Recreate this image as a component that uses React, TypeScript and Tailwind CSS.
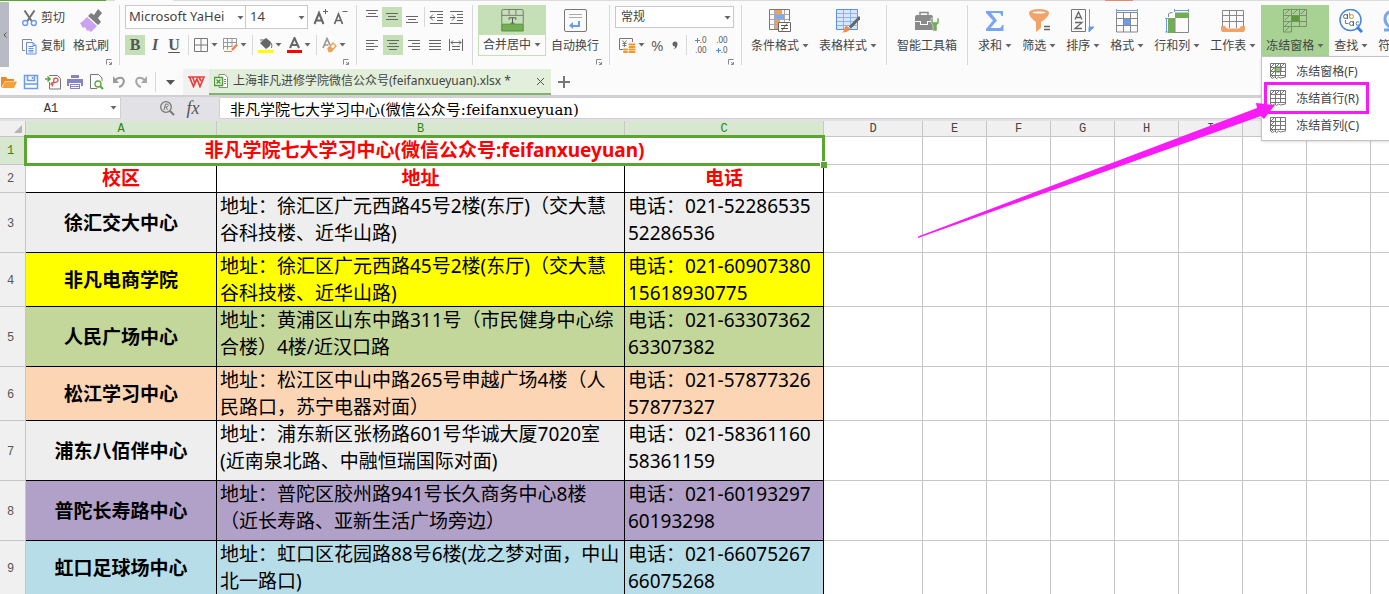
import type { ReactNode } from "react"
import clsx from "clsx"

interface GroupProps {
    children: ReactNode
    launcher?: boolean
    last?: boolean
    className?: string
}

interface BigButtonProps {
    label: string
    icon: ReactNode
    caret?: boolean
    className?: string
}

interface Campus {
    name: string
    address: string[]
    phone: string[]
    color: string
    height: string
}

const campuses: Campus[] = [
    { name: "徐汇交大中心", address: ["地址：徐汇区广元西路45号2楼(东厅)（交大慧", "谷科技楼、近华山路)"], phone: ["电话：021-52286535", "52286536"], color: "bg-[#eeeeee]", height: "h-[60px]" },
    { name: "非凡电商学院", address: ["地址：徐汇区广元西路45号2楼(东厅)（交大慧", "谷科技楼、近华山路)"], phone: ["电话：021-60907380", "15618930775"], color: "bg-[#ffff00]", height: "h-[54px]" },
    { name: "人民广场中心", address: ["地址：黄浦区山东中路311号（市民健身中心综", "合楼）4楼/近汉口路"], phone: ["电话：021-63307362", "63307382"], color: "bg-[#c4d79b]", height: "h-[60px]" },
    { name: "松江学习中心", address: ["地址：松江区中山中路265号申越广场4楼（人", "民路口，苏宁电器对面）"], phone: ["电话：021-57877326", "57877327"], color: "bg-[#fcd5b4]", height: "h-[54px]" },
    { name: "浦东八佰伴中心", address: ["地址：浦东新区张杨路601号华诚大厦7020室", "(近南泉北路、中融恒瑞国际对面)"], phone: ["电话：021-58361160", "58361159"], color: "bg-[#eeeeee]", height: "h-[60px]" },
    { name: "普陀长寿路中心", address: ["地址：普陀区胶州路941号长久商务中心8楼", "（近长寿路、亚新生活广场旁边）"], phone: ["电话：021-60193297", "60193298"], color: "bg-[#b1a0c7]", height: "h-[60px]" },
    { name: "虹口足球场中心", address: ["地址：虹口区花园路88号6楼(龙之梦对面，中山", "北一路口)"], phone: ["电话：021-66075267", "66075268"], color: "bg-[#b7dde8]", height: "h-[54px]" },
]

const spare = ["D", "E", "F", "G", "H", "I", "", "", ""]

function Caret({ className }: { className?: string }) {
    return (
        <svg width="7" height="4" viewBox="0 0 7 4" className={clsx("shrink-0", className)}>
            <path d="M0.5 0h6L3.5 3.6z" fill="#666" />
        </svg>
    )
}

function Group({ children, launcher, last, className }: GroupProps) {
    return (
        <div className={clsx("relative flex h-[60px] shrink-0", !last && "border-r border-[#d8d8d8]", className)}>
            {children}
            {launcher && (
                <svg width="6" height="6" viewBox="0 0 6 6" className="absolute bottom-0 right-[7px]">
                    <path d="M0.5 5.5V0.5H5.5M3 5.5H5.5V3M3 3l2 2" fill="none" stroke="#888" />
                </svg>
            )}
        </div>
    )
}

function Separator() {
    return <span className="h-5 w-px shrink-0 bg-[#d8d8d8]" />
}

function BigButton({ label, icon, caret = true, className }: BigButtonProps) {
    return (
        <button className={clsx("flex h-[51px] shrink-0 flex-col items-center px-[5px] pt-1", className)}>
            <span className="flex h-6 items-start">{icon}</span>
            <span className="mt-[3px] flex items-center gap-[3px] whitespace-nowrap leading-[20px]">
                {label}
                {caret && <Caret />}
            </span>
        </button>
    )
}

function Tool({ label, children }: { label: string; children: ReactNode }) {
    return (
        <button aria-label={label} className="flex h-5 shrink-0 items-center gap-[2px]">
            {children}
            <Caret />
        </button>
    )
}

function Lines({ label, rows, active }: { label: string; rows: string; active?: boolean }) {
    return (
        <button aria-label={label} className={clsx("flex size-5 shrink-0 items-center justify-center", active && "bg-[#c5e0b7]")}>
            <svg width="16" height="16" viewBox="0 0 16 16" fill="none" stroke="#666">
                <path d={rows} />
            </svg>
        </button>
    )
}

/* ---------- clipboard ---------- */

function Clipboard() {
    return (
        <Group launcher className="pl-[13px] pr-[10px]">
            <div className="flex flex-col gap-2">
                <button className="flex h-5 items-center gap-1 pt-[6px]">
                    <svg width="15" height="17" viewBox="0 0 15 17" fill="none">
                        <path d="M2.5 0.5L9.6 11M12.5 0.5L5.4 11" stroke="#707070" strokeWidth="2" />
                        <circle cx="3.2" cy="13" r="2.5" stroke="#6c9be8" strokeWidth="1.4" />
                        <circle cx="11.8" cy="13" r="2.5" stroke="#6c9be8" strokeWidth="1.4" />
                    </svg>
                    剪切
                </button>
                <button className="flex h-5 items-center gap-1 pt-[6px]">
                    <svg width="15" height="17" viewBox="0 0 15 17" fill="none">
                        <path d="M3 12.5H0.5V1.5H9.5V3" stroke="#888" />
                        <path d="M4.5 4.5H11L14 7.5V16H4.5z" fill="#fff" stroke="#5c8ee6" />
                        <path d="M6.5 8.5h5M6.5 10.5h5M6.5 12.5h5M6.5 14h5M11 4.5v3h3" stroke="#5c8ee6" />
                    </svg>
                    复制
                </button>
            </div>
            <button className="ml-2 flex h-[51px] flex-col items-center pt-1">
                <svg width="24" height="24" viewBox="0 0 24 24">
                    <path d="M1 14L4 12l4-4 10 9-6 6-3-2-1 1-2-4-2 1z" fill="#c9a3f0" />
                    <path d="M9 7l3-3 3 2L19 0l4 4-4 5 3 4-3 3z" fill="#7d7d7d" />
                </svg>
                <span className="mt-[3px] leading-[20px]">格式刷</span>
            </button>
        </Group>
    )
}

/* ---------- font ---------- */

function FontGroup() {
    return (
        <Group launcher className="flex-col gap-[6px] pl-[5px] pr-[7px]">
            <div className="flex h-6 items-center">
                <div className="relative h-6 w-[121px]">
                    <select aria-label="字体" className="size-full appearance-none border border-[#c8c8c8] bg-white pl-[3px] text-[13px] outline-none">
                        <option>Microsoft YaHei</option>
                    </select>
                    <Caret className="pointer-events-none absolute right-[2px] top-[11px]" />
                </div>
                <div className="relative -ml-px h-6 w-[63px]">
                    <select aria-label="字号" className="size-full appearance-none border border-[#c8c8c8] bg-white pl-1 text-[13px] outline-none">
                        <option>14</option>
                    </select>
                    <Caret className="pointer-events-none absolute right-[3px] top-[11px]" />
                </div>
                <button aria-label="增大字号" className="ml-[5px]">
                    <svg width="16" height="18" viewBox="0 0 16 18" fill="none" stroke="#666">
                        <path d="M1.500 16L6 5 10.500 16M3 12.500h6" strokeWidth="2" />
                        <path d="M10 3.500h5M12.500 1v5" />
                    </svg>
                </button>
                <button aria-label="减小字号" className="ml-1">
                    <svg width="16" height="18" viewBox="0 0 16 18" fill="none" stroke="#666">
                        <path d="M1.500 16L5.500 6 9.500 16M3 12.500h5" strokeWidth="1.700" />
                        <path d="M9.500 3.500h5" />
                    </svg>
                </button>
            </div>
            <div className="flex h-5 items-center gap-[5px] text-[#555]">
                <div className="flex font-['Liberation_Serif',serif] text-base leading-5">
                    <button className="w-5 bg-[#c5e0b7] font-bold">B</button>
                    <button className="w-5 font-bold italic">I</button>
                    <button className="w-[18px] font-bold underline underline-offset-2">U</button>
                </div>
                <Separator />
                <Tool label="边框">
                    <svg width="15" height="14" viewBox="0 0 15 14" fill="none" stroke="#777">
                        <path d="M0.500 0.500h13v13h-13zM7 0.500v13M0.500 7h13" />
                    </svg>
                </Tool>
                <Tool label="绘图边框">
                    <svg width="15" height="14" viewBox="0 0 15 14" fill="none">
                        <path d="M0.500 0.500h13v6M0.500 0.500v11M4.500 0.500v11M9 0.500v8M0.500 4.500h13M0.500 8.500h9" stroke="#999" />
                        <path d="M14 6.500l-5 5.500" stroke="#f08246" strokeWidth="2.500" />
                        <path d="M1 13.500h8" stroke="#f08246" />
                    </svg>
                </Tool>
                <Separator />
                <Tool label="填充颜色">
                    <svg width="15" height="16" viewBox="0 0 15 16">
                        <path d="M2 6l6-5 5 4-1 4-4 3z" fill="#666" />
                        <path d="M2 3h5M13 6c1 1 1 3 0.500 5" stroke="#666" fill="none" />
                        <path d="M0 13h15v3H0z" fill="#ffff00" />
                    </svg>
                </Tool>
                <Tool label="字体颜色">
                    <svg width="15" height="16" viewBox="0 0 15 16">
                        <path d="M3 11L7.500 1 12 11M4.500 8h6" stroke="#666" strokeWidth="2" fill="none" />
                        <path d="M0 13h15v3H0z" fill="#ff0000" />
                    </svg>
                </Tool>
                <Separator />
                <Tool label="清除">
                    <svg width="15" height="16" viewBox="0 0 15 16" fill="none">
                        <path d="M1 11L5 1.500 8 8M2.500 8h4" stroke="#999" strokeWidth="1.700" />
                        <path d="M6 11.500l5-5.500 3 3-5 5.500H7z" stroke="#eda255" strokeWidth="1.500" fill="#fff" />
                        <path d="M6 11.500l2.500-2.500 3 3L9 14.500H7z" fill="#eda255" />
                    </svg>
                </Tool>
            </div>
        </Group>
    )
}

/* ---------- alignment ---------- */

function AlignGroup() {
    return (
        <Group className="flex-col gap-2 px-[5px]">
            <div className="flex items-center pt-[2px]">
                <Lines label="顶端对齐" rows="M2 1.500h12M4 4.500h8M2 7.500h12" />
                <Lines label="垂直居中" rows="M2 4.500h12M4 7.500h8M2 10.500h12" active />
                <Lines label="底端对齐" rows="M2 7.500h12M4 10.500h8M2 13.500h12" />
                <span className="mx-[2px] h-5 w-px bg-[#d8d8d8]" />
                <Lines label="减少缩进" rows="M1 2.500h13M8 5.500h6M8 8.500h6M8 11.500h6M1 14.500h13M1 8.500h5M4 5.500L1 8.500l3 3" />
                <Lines label="增加缩进" rows="M1 2.500h13M8 5.500h6M8 8.500h6M8 11.500h6M1 14.500h13M1 8.500h5M3 5.500l3 3-3 3" />
            </div>
            <div className="flex items-center gap-px">
                <Lines label="左对齐" rows="M2 3.500h12M2 6.500h8M2 9.500h12M2 12.500h8" />
                <Lines label="居中" rows="M2 3.500h12M4 6.500h8M2 9.500h12M4 12.500h8" active />
                <Lines label="右对齐" rows="M2 3.500h12M6 6.500h8M2 9.500h12M6 12.500h8" />
                <Lines label="两端对齐" rows="M2 3.500h12M2 6.500h12M2 9.500h12M2 12.500h12" />
                <Lines label="分散对齐" rows="M1.500 2v12M14.500 2v12M3 5.500h10M5 3.500l-2 2 2 2M11 3.500l2 2-2 2M4 9.500h8M4 12.500h8" />
            </div>
        </Group>
    )
}

function MergeGroup() {
    return (
        <Group launcher className="pl-[5px] pr-[5px]">
            <button className="flex h-[51px] flex-col items-center border border-[#c5e0b7] bg-[#c5e0b7]">
                <svg width="23" height="24" viewBox="0 0 23 24" fill="none" className="mt-[3px]">
                    <path d="M0.500 15.500h22v7h-22z" fill="#74ae55" stroke="#5a8f3e" />
                    <path d="M0.500 15V2Q0.500 0.500 2 0.500H21Q22.500 0.500 22.500 2V15M0.500 6.500h22M8 1v5M15 1v5" stroke="#777" />
                    <path d="M8 9h7v2M11.500 9v5.500M9.500 14.500h4M8 9v2" stroke="#555" />
                </svg>
                <span className="mt-[3px] flex h-5 items-center gap-[3px] bg-[#fbfbfb] px-1">
                    合并居中
                    <Caret />
                </span>
            </button>
            <BigButton label="自动换行" caret={false} icon={
                <svg width="23" height="24" viewBox="0 0 23 24" fill="none">
                    <rect x="0.500" y="0.500" width="22" height="22" rx="1.500" stroke="#777" />
                    <path d="M5 5.500h13M5 8.500h13" stroke="#aaa" />
                    <path d="M15 12v5H7" stroke="#6c9be8" strokeWidth="2" />
                    <path d="M9 13v7l-4-3.500z" fill="#6c9be8" />
                </svg>
            } />
        </Group>
    )
}

function NumberGroup() {
    return (
        <Group launcher className="flex-col gap-[6px] pl-[5px] pr-[7px]">
            <div className="relative h-6 w-[119px] py-px">
                <select aria-label="数字格式" className="size-full appearance-none border border-[#c8c8c8] bg-white pl-[5px] outline-none">
                    <option>常规</option>
                </select>
                <Caret className="pointer-events-none absolute right-[3px] top-[11px]" />
            </div>
            <div className="flex h-5 items-center pl-1">
                <Tool label="货币">
                    <svg width="17" height="17" viewBox="0 0 17 17" fill="none">
                        <path d="M4 12.500H0.500V1.500H13.500V5M3.500 3.500l2 2.500 2-2.500M5.500 6v4M3.500 6.500h4M3.500 8.500h4" stroke="#777" />
                        <path d="M10.500 7.500h5M10.500 10h5M10.500 12.500h5M10.500 15h5M5 12.500h3M5 15h3" stroke="#f0982c" strokeWidth="2" strokeLinecap="round" />
                    </svg>
                </Tool>
                <button className="ml-[6px] text-[15px] leading-5 text-[#666]">%</button>
                <button aria-label="千位分隔" className="ml-2">
                    <svg width="6" height="9" viewBox="0 0 6 9"><path d="M0.500 3a2.500 2.500 0 1 1 5 0q0 4-4 5.500 2-2 1.500-3Q0.500 5.500 0.500 3z" fill="#666" /></svg>
                </button>
                <span className="ml-2 mr-1 h-5 w-px bg-[#d8d8d8]" />
                <button aria-label="增加小数位" className="flex w-4 flex-col items-end text-[8px] leading-[10px] text-[#555]">
                    <span className="flex items-center">
                        <svg width="5" height="5" viewBox="0 0 5 5" stroke="#4f86e0"><path d="M0 2.500h5M2.500 0v5" /></svg>
                        .0
                    </span>
                    <span>.00</span>
                </button>
                <button aria-label="减少小数位" className="ml-[5px] flex w-4 flex-col items-end text-[8px] leading-[10px] text-[#555]">
                    <span>.00</span>
                    <span className="flex items-center">
                        <svg width="5" height="5" viewBox="0 0 5 5" stroke="#4f86e0"><path d="M0 2.500h5M2.500 0v5" /></svg>
                        .0
                    </span>
                </button>
            </div>
        </Group>
    )
}

/* ---------- large buttons ---------- */

const conditionalIcon = (
    <svg width="23" height="24" viewBox="0 0 23 24" fill="none">
        <path d="M6 1h7v5H6zM6 11h5v5H6zM6 16h3v5H6z" fill="#f5a05a" />
        <path d="M6 6h9v5H6z" fill="#7fabf5" />
        <path d="M5.500 1v20M15.500 1v12M1 5.500h20M1 10.500h20M1 15.500h8" stroke="#aaa" />
        <path d="M9 20.500H0.500V0.500H20.500V12" stroke="#777" />
        <path d="M9.500 13.500h12v9h-12z" fill="#fff" stroke="#666" />
        <path d="M12 16.500h7M12 19.500h7M18 14.500l-5 7" stroke="#555" />
    </svg>
)

const tableStyleIcon = (
    <svg width="24" height="24" viewBox="0 0 24 24" fill="none">
        <path d="M0.500 0.500h21v20h-21z" fill="#d9e6fb" stroke="#5c8ee6" />
        <path d="M1 4.500h21M1 8.500h21M1 12.500h21M1 16.500h21M7.500 1v19M14.500 1v19" stroke="#8fb2f0" />
        <path d="M24 8L14 18.500" stroke="#666" strokeWidth="3" />
        <path d="M10 16.500l4 3q-1 4-8 4 2-1 2.500-4z" fill="#f08c46" />
    </svg>
)

const toolboxIcon = (
    <svg width="24" height="24" viewBox="0 0 24 24">
        <path d="M5 6V3.500h8V6" fill="none" stroke="#8a8a8a" strokeWidth="1.500" />
        <path d="M0 8q0-2 2-2h14q2 0 2 2v4H0zM0 13h5v3h8v-3h5v8H0zM6 12h6v3H6z" fill="#8a8a8a" />
        <path d="M16 9v5l2 2v6h4v-6l2-2V9h-2v4h-4V9z" fill="#72ad55" stroke="#fbfbfb" strokeWidth="0.500" />
    </svg>
)

const sumIcon = (
    <svg width="20" height="24" viewBox="0 0 20 24">
        <path d="M1 2h17v5h-1.500q-.5-3-3-3H6l6 7.500L5.500 19H14q2.500 0 3-3h1.500v6H1v-2l7-8.500L1 4z" fill="#7aa5f0" />
    </svg>
)

const filterIcon = (
    <svg width="23" height="24" viewBox="0 0 23 24">
        <ellipse cx="11" cy="3.500" rx="10" ry="3.500" fill="#f0a46a" />
        <path d="M1 4q0 4 7 9v10l5-4v-6q8-5 8-9z" fill="#f0a46a" />
        <ellipse cx="11" cy="3.500" rx="6.500" ry="1" fill="#fbfbfb" />
        <path d="M16 17.500h6M16 20.500h6" stroke="#666" strokeWidth="1.500" />
    </svg>
)

const sortIcon = (
    <svg width="24" height="24" viewBox="0 0 24 24" fill="none">
        <path d="M0.500 0.500h14v22h-14z" stroke="#777" />
        <path d="M4 10.500L7.500 3 11 10.500M5 8.500h5M4 13.500h7l-7 6h7" stroke="#666" strokeWidth="1.300" />
        <path d="M18.500 0v22M18 23v-5h5z" stroke="#6c9be8" fill="#6c9be8" />
    </svg>
)

const formatIcon = (
    <svg width="22" height="24" viewBox="0 0 22 24" fill="none">
        <path d="M0.500 0v3M21.500 0v3M1 1.500h20" stroke="#6c9be8" />
        <path d="M0.500 3.500h21v19.500h-21zM7.500 4v19M14.500 4v19M1 9.500h20M1 16.500h20" stroke="#888" />
        <path d="M8 10h6v6H8z" fill="#6c9be8" />
    </svg>
)

const rowColIcon = (
    <svg width="24" height="24" viewBox="0 0 24 24" fill="none">
        <path d="M9.500 1.500h14M9.500 0v3M23.500 0v3M1.500 9v14M0 9.500h3M0 23h3" stroke="#6c9be8" />
        <path d="M10 3.500h14V9H10zM3 9h7v15H3z" fill="#72ad55" />
        <path d="M23.500 9v14.500H10V9M3.500 8V5q0-1.500 4-1.500" stroke="#888" />
    </svg>
)

const sheetIcon = (
    <svg width="24" height="24" viewBox="0 0 24 24" fill="none">
        <path d="M1.500 1.500h21v20h-21zM8.500 1v18M15.500 1v18M1 6.500h21M1 12.500h21" stroke="#888" />
        <path d="M0 17h4l2 2.500h12l2-2.500h4v4q0 2-2 2H2q-2 0-2-2z" fill="#f0a46a" />
    </svg>
)

const freezeIcon = (
    <svg width="24" height="24" viewBox="0 0 24 24" fill="none">
        <path d="M8 6h8v6H8z" fill="#5c9a3c" />
        <path d="M0.500 0.500h23v17h-15v5.500h-8zM8.500 1v17M16.500 1v17M0.500 6.500h23M0.500 12.500h23M0.500 17.500h8" stroke="#7b8f70" />
        <path d="M2 5l4-4M10 5l4-4M18 5l4-4M2 11l4-4M2 17l4-4M2 22l4-4" stroke="#7b8f70" />
    </svg>
)

const findIcon = (
    <svg width="24" height="24" viewBox="0 0 24 24" fill="none">
        <circle cx="11.500" cy="11" r="10.500" stroke="#4a86d8" fill="#fff" strokeWidth="1.500" />
        <path d="M18 18l5 5" stroke="#3f7fd8" strokeWidth="3" />
        <circle cx="6.500" cy="7.500" r="2" stroke="#666" /><path d="M8.500 5v5" stroke="#666" />
        <circle cx="12.500" cy="7.500" r="2" stroke="#e08a3c" /><path d="M10.500 3.500v6" stroke="#e08a3c" />
        <path d="M6.500 11v3.500h3" stroke="#4a86d8" />
        <circle cx="12.500" cy="14.500" r="2" stroke="#666" /><path d="M14.500 12v5" stroke="#666" />
        <path d="M20 13q-3-1-3 1.500t3 1.500" stroke="#4a86d8" />
    </svg>
)

const symbolIcon = (
    <svg width="24" height="24" viewBox="0 0 24 24" fill="none">
        <path d="M1 21h6v-3Q2 15 2 10q0-8 10-8t10 8q0 5-5 8v3h6" stroke="#7aa5f0" strokeWidth="3" />
    </svg>
)

/* ---------- freeze menu ---------- */

function MenuIcon({ kind }: { kind: "pane" | "row" | "col" }) {
    return (
        <svg width="17" height="17" viewBox="0 0 17 17" fill="none" stroke="#777">
            {kind === "pane" && <path d="M5 4h6v5H5z" fill="#8cc870" stroke="#5c9a3c" />}
            <path d="M0.500 0.500h15v12h-15zM5.500 1v14M10.500 1v12M0.500 4.500h15M0.500 8.500h15" />
            <path d="M0.500 12v2l2 1.500 2-1.500 2 1.500 2-1.500 2 1 5-1v-2" />
            {kind !== "col" && <path d="M1 4l3-3M6 4l3-3M11 4l3-3" />}
            {kind !== "row" && <path d="M1 4l3-3M1 8l3-3M1 12l3-3M1 15l3-3" />}
        </svg>
    )
}

function FreezeMenu() {
    const item = "relative flex h-[27px] w-full items-center gap-[9px] pl-2 text-left"
    return (
        <div className="absolute left-0 top-[51px] z-20 w-40 border border-[#c4c4c4] bg-white pb-px pt-px shadow">
            <button className={item}><MenuIcon kind="pane" />冻结窗格(F)</button>
            <button className={item}>
                <MenuIcon kind="row" />冻结首行(R)
                <span className="absolute -top-[3px] left-[2px] h-8 w-[105px] border-[3px] border-[#f81bf6]" />
            </button>
            <button className={item}><MenuIcon kind="col" />冻结首列(C)</button>
        </div>
    )
}

function Ribbon() {
    return (
        <div className="flex h-[68px] pt-1">
            <button aria-label="向左滚动" className="-mt-[3px] flex h-[65px] w-[9px] shrink-0 items-center justify-center bg-[#b8bbc4]">
                <svg width="4" height="6" viewBox="0 0 4 6" fill="none" stroke="#555"><path d="M3.500 0.500L1 3l2.500 2.500" /></svg>
            </button>
            <Clipboard />
            <FontGroup />
            <AlignGroup />
            <MergeGroup />
            <NumberGroup />
            <Group className="px-1">
                <BigButton label="条件格式" icon={conditionalIcon} />
                <BigButton label="表格样式" icon={tableStyleIcon} />
            </Group>
            <Group className="px-[5px]">
                <BigButton label="智能工具箱" icon={toolboxIcon} caret={false} />
            </Group>
            <Group last className="pl-[5px]">
                <BigButton label="求和" icon={sumIcon} />
                <BigButton label="筛选" icon={filterIcon} />
                <BigButton label="排序" icon={sortIcon} />
                <BigButton label="格式" icon={formatIcon} />
                <BigButton label="行和列" icon={rowColIcon} />
                <BigButton label="工作表" icon={sheetIcon} />
                <div className="relative">
                    <BigButton label="冻结窗格" icon={freezeIcon} className="bg-[#a8d293]" />
                    <FreezeMenu />
                </div>
                <BigButton label="查找" icon={findIcon} />
                <BigButton label="符号" icon={symbolIcon} />
            </Group>
        </div>
    )
}

/* ---------- quick access and file tabs ---------- */

function TabBar() {
    return (
        <div className="flex h-[26px] items-center">
            <div className="flex items-center gap-[6px] pl-px">
                <button aria-label="打开">
                    <svg width="16" height="16" viewBox="0 0 16 16"><path d="M0 14V3h5l1.500 2H13v2H4z" fill="#f08a1e" /><path d="M4 7.500h12L13 14H1z" fill="#f7a13c" /></svg>
                </button>
                <button aria-label="保存">
                    <svg width="16" height="16" viewBox="0 0 16 16" fill="none" stroke="#6c9be8" strokeWidth="1.500"><path d="M1.500 1.500h13v13h-13zM4.500 2v4.500h7V2M2 10h12M9.500 3v2" /></svg>
                </button>
                <button aria-label="输出为PDF">
                    <svg width="16" height="16" viewBox="0 0 16 16" fill="none"><path d="M4.500 2V1.500h8l3 3v10.500h-11V8" stroke="#777" /><path d="M7 12.500q2-4 2-8 4-1 4 1.500t-4 2.500q-3 0-3 2.500" stroke="#d9534f" strokeWidth="1.300" /><path d="M0 5h4M2.500 2.500L5 5 2.500 7.500" stroke="#5da33f" strokeWidth="1.500" /></svg>
                </button>
                <button aria-label="打印">
                    <svg width="16" height="16" viewBox="0 0 16 16"><path d="M4 1h8v3H4zM0 5h16v7h-2V9H2v3H0zM3 10h10v5H3z" fill="#8583c4" /><path d="M4 11.500h8M4 13.500h8" stroke="#fff" /></svg>
                </button>
                <button aria-label="打印预览">
                    <svg width="16" height="16" viewBox="0 0 16 16" fill="none"><path d="M8 14.500H1.500V0.500h8l3.500 3.500V7" stroke="#777" /><circle cx="9" cy="10" r="3" stroke="#5da33f" strokeWidth="1.300" /><path d="M11 12l3 3" stroke="#5da33f" strokeWidth="2" /></svg>
                </button>
                <button aria-label="撤销">
                    <svg width="16" height="16" viewBox="0 0 16 16" fill="none"><path d="M4 6q4-3 7-2 3 2 1 6-1 2-4 3" stroke="#999" strokeWidth="2" /><path d="M2 2v7h6z" fill="#999" /></svg>
                </button>
                <button aria-label="恢复">
                    <svg width="16" height="16" viewBox="0 0 16 16" fill="none"><path d="M12 6Q8 3 5 4 2 6 4 10q1 2 4 3" stroke="#a6a6a6" strokeWidth="2" /><path d="M14 2v7H8z" fill="#a6a6a6" /></svg>
                </button>
                <Separator />
            </div>
            <button aria-label="自定义" className="ml-[10px] mr-2">
                <svg width="9" height="5" viewBox="0 0 9 5"><path d="M0 0h9L4.500 5z" fill="#555" /></svg>
            </button>
            <button aria-label="WPS" className="flex h-full w-[26px] items-center justify-center bg-[#f1f1f1]">
                <svg width="17" height="12" viewBox="0 0 17 12" fill="none" stroke="#e8403c" strokeWidth="1.700"><path d="M0 1h11.500M1.500 1l4 9.500L9 3l3 7.500L16 1h-5l2 4M4.500 1L7 7" /></svg>
            </button>
            <div className="flex h-full w-[342px] items-center border-b-2 border-[#83b26e] bg-[#e2efda] pl-[5px] pr-[6px]">
                <svg width="15" height="15" viewBox="0 0 15 15" fill="none">
                    <path d="M5 0.500h6l2.500 3v10H5z" fill="#fff" stroke="#888" /><path d="M10 5.500h2M10 7.500h2M10 9.500h2" stroke="#888" />
                    <path d="M0.500 3.500h8v8h-8z" fill="#fff" stroke="#4e9a34" strokeWidth="1.500" /><path d="M2.500 5.500l4 4M6.500 5.500l-4 4" stroke="#4e9a34" strokeWidth="1.500" />
                </svg>
                <span className="ml-1 flex-1 whitespace-nowrap">上海非凡进修学院微信公众号(feifanxueyuan).xlsx *</span>
                <button aria-label="关闭">
                    <svg width="9" height="9" viewBox="0 0 9 9" stroke="#555"><path d="M1 1l7 7M8 1L1 8" /></svg>
                </button>
            </div>
            <button aria-label="新建" className="ml-[7px]">
                <svg width="12" height="12" viewBox="0 0 12 12" stroke="#777" strokeWidth="2"><path d="M6 0v12M0 6h12" /></svg>
            </button>
        </div>
    )
}

function FormulaBar() {
    return (
        <div className="flex h-[26px] border-t-2 border-[#d0d0d5] bg-[#e2e2e6] pb-[2px]">
            <div className="flex w-[121px] items-center border-y border-r border-[#d0d0d5] bg-white pr-[3px]">
                <input aria-label="名称框" defaultValue="A1" className="h-full w-0 flex-1 bg-transparent pr-2 pt-px text-center font-['Liberation_Mono',monospace] text-xs text-[#333] outline-none" />
                <Caret />
            </div>
            <button aria-label="查找函数" className="ml-[39px]">
                <svg width="15" height="15" viewBox="0 0 15 15" fill="none" stroke="#777"><circle cx="6" cy="6" r="5.300" strokeWidth="1.300" /><path d="M4 9l1.500-6h2q2 1.500-.5 3H5M6 6l1.500 3" /><path d="M10 10l4 4" strokeWidth="2" /></svg>
            </button>
            <button className="ml-[10px] w-4 font-['Liberation_Serif',serif] text-lg italic leading-[18px] text-[#555]">fx</button>
            <input
                aria-label="编辑栏"
                defaultValue="非凡学院七大学习中心(微信公众号:feifanxueyuan)"
                className="ml-[18px] h-full min-w-0 flex-1 border-y border-l border-[#d0d0d5] bg-white pl-[10px] font-['DejaVu_Serif','Noto_Sans_CJK_SC',serif] text-[15px] text-black outline-none"
            />
        </div>
    )
}

/* ---------- sheet ---------- */

function Blank() {
    return <>{spare.map((_, i) => <td key={i} className="border-b border-r border-[#c6c6c6]" />)}</>
}

function Sheet() {
    const rowHead = "border-b border-r border-[#c6c6c6] bg-[#f0f0f0] p-0 pr-1 text-center font-['Liberation_Mono',monospace] text-xs font-normal text-[#555]"
    const colHead = "border-b border-r border-[#c6c6c6] p-0 pt-px text-center font-['Liberation_Mono',monospace] text-xs leading-[14px] font-normal"
    const cell = "border-b border-r border-black p-0"

    return (
        <div className="min-h-0 flex-1 overflow-hidden bg-white">
            <table className="w-[1435px] table-fixed border-separate border-spacing-0">
                <colgroup>
                    <col className="w-[26px]" />
                    <col className="w-[191px]" />
                    <col className="w-[408px]" />
                    <col className="w-[199px]" />
                    <col className="w-[99px]" />
                    {spare.slice(1).map((_, i) => <col key={i} className="w-16" />)}
                </colgroup>
                <thead>
                    <tr className="h-4">
                        <th className="border-b border-r border-[#c6c6c6] bg-[#f0f0f0] p-0">
                            <svg width="8" height="8" viewBox="0 0 8 8" className="ml-[14px]"><path d="M8 0v8H0z" fill="#b4b4b4" /></svg>
                        </th>
                        {["A", "B", "C"].map(c => <th key={c} className={clsx(colHead, "bg-[#d8e7d0] text-[#2f8510]")}>{c}</th>)}
                        {spare.map((c, i) => <th key={i} className={clsx(colHead, "bg-[#f0f0f0] text-[#444]")}>{c}</th>)}
                    </tr>
                </thead>
                <tbody className="text-[19px] text-black">
                    <tr className="h-7">
                        <th className="border-b border-r border-[#c6c6c6] bg-[#d8e7d0] p-0 pr-1 text-center font-['Liberation_Mono',monospace] text-xs font-normal text-[#2f8510]">1</th>
                        <td colSpan={3} className="relative border-b border-r border-black p-0 text-center font-bold leading-[27px] text-[#ff0000]">
                            非凡学院七大学习中心(微信公众号:feifanxueyuan)
                            <span className="absolute -inset-[2px] border-[3px] border-[#5ba532]" />
                            <span className="absolute -bottom-1 -right-1 size-[7px] border-l border-t border-white bg-[#5ba532]" />
                        </td>
                        <Blank />
                    </tr>
                    <tr className="h-7 text-center font-bold leading-[27px] text-[#ff0000]">
                        <th className={rowHead}>2</th>
                        <td className={cell}>校区</td>
                        <td className={cell}>地址</td>
                        <td className={cell}>电话</td>
                        <Blank />
                    </tr>
                    {campuses.map((campus, i) => (
                        <tr key={campus.name} className={campus.height}>
                            <th className={clsx(rowHead, "pt-[2px]")}>{i + 3}</th>
                            <td className={clsx(cell, campus.color, "pt-[2px] text-center font-bold")}>{campus.name}</td>
                            {[campus.address, campus.phone].map(lines => (
                                <td key={lines[0]} className={clsx(cell, campus.color, "pl-[3px] align-top")}>
                                    <div className="h-[53px] whitespace-nowrap leading-[27px]">
                                        {lines.map(line => <div key={line}>{line}</div>)}
                                    </div>
                                </td>
                            ))}
                            <Blank />
                        </tr>
                    ))}
                </tbody>
            </table>
        </div>
    )
}

function App() {
    return (
        <div lang="zh-CN" className="relative flex h-screen flex-col overflow-hidden bg-[#fbfbfb] font-['Noto_Sans','Noto_Sans_CJK_SC',sans-serif] text-xs text-[#444]">
            <div className="flex h-px shrink-0 bg-[#dcdcdc]">
                <span className="w-[106px] bg-[#5ba532]" />
                <span className="ml-[9px] w-[58px] bg-[#fbfbfb]" />
                <span className="ml-[932px] w-7 bg-[#e08a72]" />
            </div>
            <Ribbon />
            <TabBar />
            <FormulaBar />
            <Sheet />
            <svg width="360" height="140" viewBox="917 100 360 140" className="pointer-events-none absolute left-[917px] top-[100px] z-30">
                <path d="M918 236.500L1257 108l-1-5 19 2-11 14-3-3L918 238z" fill="#f81bf6" />
            </svg>
        </div>
    )
}

export default App
